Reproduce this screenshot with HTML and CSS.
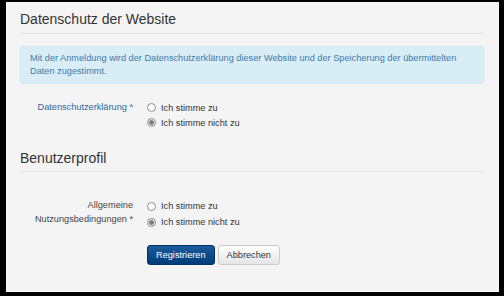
FILE: index.html
```html
<!DOCTYPE html>
<html lang="de">
<head>
  <meta charset="UTF-8">
  <meta name="viewport" content="width=device-width,initial-scale=1.0">
  <title>Registrierung</title>
  <link rel="stylesheet" href="styles.css">
</head>
<body>
  <form class="panel">
    <h2 class="section-title">Datenschutz der Website</h2>
    <div class="alert">
      Mit der Anmeldung wird der Datenschutzerklärung dieser Website und der Speicherung der übermittelten Daten zugestimmt.
    </div>

    <div class="form-row">
      <label class="field-label link">Datenschutzerklärung *</label>
      <div class="choices">
        <label class="choice"><input type="radio" name="privacy"> Ich stimme zu</label>
        <label class="choice"><input type="radio" name="privacy" checked> Ich stimme nicht zu</label>
      </div>
    </div>

    <h2 class="section-title second">Benutzerprofil</h2>

    <div class="form-row terms">
      <label class="field-label">Allgemeine<br>Nutzungsbedingungen *</label>
      <div class="choices">
        <label class="choice"><input type="radio" name="terms"> Ich stimme zu</label>
        <label class="choice"><input type="radio" name="terms" checked> Ich stimme nicht zu</label>
      </div>
    </div>

    <div class="actions">
      <button type="button" class="btn btn-primary">Registrieren</button>
      <button type="button" class="btn btn-default">Abbrechen</button>
    </div>
  </form>
</body>
</html>
```

FILE: styles.css
```css
:root {
  --panel-bg: #f4f4f4;
  --text: #333;
  --line: #e4e4e4;
  --label-col: 113px;
}
*, *::before, *::after { box-sizing: border-box; }
body {
  margin: 0;
  background: #000;
  padding: 2px 5px 4px 6px;
  font-family: 'Liberation Sans', Arial, sans-serif;
  font-size: 9.2px;
  color: var(--text);
}

.panel {
  height: 290px;
  background: var(--panel-bg);
  border: 1px solid #fafafa;
  padding: 0 14px 0 13px;
}

.section-title {
  margin: 6px 0 0;
  padding-bottom: 4px;
  font-size: 14px;
  line-height: 20px;
  font-weight: normal;
  color: var(--text);
  border-bottom: 1px solid var(--line);
}
.section-title.second {
  margin-top: 18px;
  padding-bottom: 3px;
}

.alert {
  margin-top: 12px;
  padding: 5px 9px;
  line-height: 13px;
  background: #d9edf7;
  border: 1px solid #d0e8f3;
  border-radius: 3px;
  color: #3c7ba8;
}

.form-row {
  display: grid;
  grid-template-columns: var(--label-col) 1fr;
  column-gap: 14px;
  margin-top: 16px;
}
.form-row.terms { margin-top: 26px; }

.field-label {
  text-align: right;
  line-height: 14px;
  color: #444;
}
.field-label.link { color: #2a6aa0; }

.choices {
  display: flex;
  flex-direction: column;
}
.choice {
  display: flex;
  align-items: center;
  gap: 5px;
  height: 15px;
  color: #333;
}
.terms .choice { height: 16px; }

.choice input {
  appearance: none;
  margin: 0;
  width: 9px;
  height: 9px;
  border: 1px solid #8d8d8d;
  border-radius: 50%;
  background: #fff;
}
.choice input:checked {
  background: radial-gradient(circle, #7d7d7d 0 2px, #e4e4e4 2.6px);
}

.actions {
  margin: 15px 0 0 127px;
  display: flex;
  gap: 3px;
}
.btn {
  height: 20px;
  padding: 0 8px;
  font: inherit;
  border-radius: 3px;
  cursor: pointer;
}
.btn-primary {
  background: linear-gradient(#1b5c9c, #003b78);
  border: 1px solid #003366;
  color: #fff;
}
.btn-default {
  background: linear-gradient(#fff, #e6e6e6);
  border: 1px solid #ccc;
  color: #333;
}
```
